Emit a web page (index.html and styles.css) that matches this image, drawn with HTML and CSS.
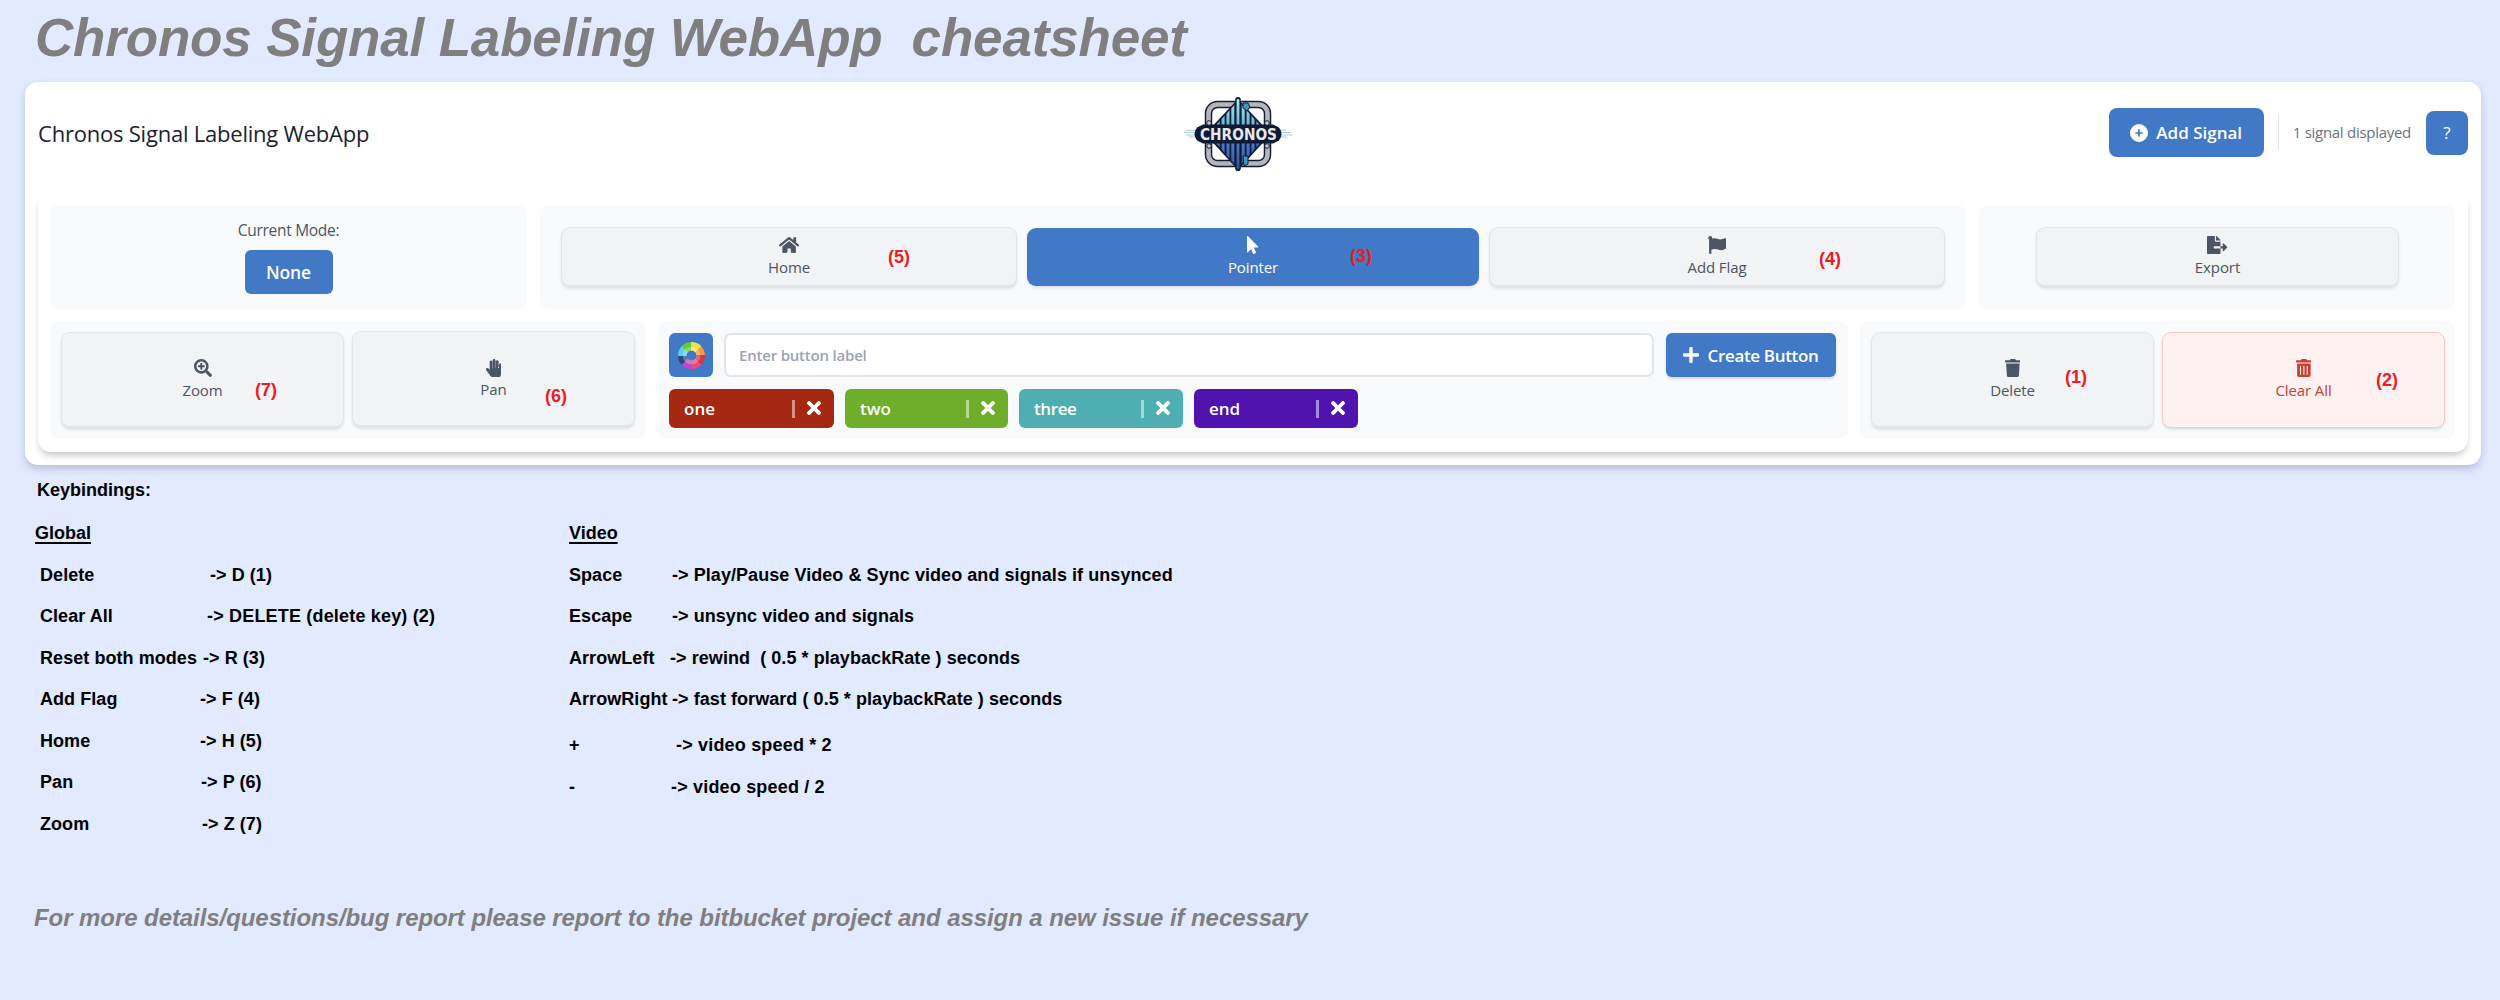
FILE: index.html
```html
<!DOCTYPE html>
<html lang="en">
<head>
<meta charset="utf-8">
<title>Chronos Signal Labeling WebApp cheatsheet</title>
<link rel="stylesheet" href="styles.css">
</head>
<body>
<h1 class="page-title">Chronos Signal Labeling WebApp  cheatsheet</h1>

<main class="panel">
  <header class="topbar">
    <h2 class="app-name">Chronos Signal Labeling WebApp</h2>
    <svg class="logo" viewBox="0 0 110 76" aria-label="Chronos">
      <defs>
        <linearGradient id="bars" gradientUnits="userSpaceOnUse" x1="0" y1="4" x2="0" y2="72">
          <stop offset="0" stop-color="#9beceb"/><stop offset=".4" stop-color="#62b4d2"/><stop offset=".6" stop-color="#4a7fd0"/><stop offset="1" stop-color="#34549f"/>
        </linearGradient>
        <clipPath id="diamond"><path d="M55 5 85 38 55 72 25 38z"/></clipPath>
      </defs>
      <rect x="25.500" y="8.500" width="59" height="59" rx="9" fill="none" stroke="#141d33" stroke-width="7.500"/>
      <rect x="25.500" y="8.500" width="59" height="59" rx="9" fill="none" stroke="#b4b6b9" stroke-width="4.600"/>
      <path d="M55 3 88 38 55 74 22 38z" fill="#121c36"/>
      <g clip-path="url(#diamond)" fill="url(#bars)">
        <path d="M28.800 0h3v76h-3zM33.700 0h3v76h-3zM38.600 0h3v76h-3zM43.500 0h3v76h-3zM48.300 0h3v76h-3zM58.700 0h3v76h-3zM63.600 0h3v76h-3zM68.500 0h3v76h-3zM73.400 0h3v76h-3zM78.200 0h3v76h-3z"/>
      </g>
      <rect x="52.200" y="1" width="5.600" height="74" rx="2.800" fill="#121c36"/>
      <rect x="53.600" y="3" width="2.800" height="70" rx="1.400" fill="url(#bars)"/>
      <path d="M60 7h5l2 4-3 4-4-3zM60 60h5v8l-4 2z" fill="#4795bd" stroke="#121c36"/>
      <path d="M1 36.500h14M3 39h12M6 41h9M3 34.500h11M95 36.500h12M95 39h14M95 34h8M95 41h9" fill="none" stroke="#a9cbdc" stroke-width="1"/>
      <path d="M20 28.500h70l6 3q5 6.500 0 13l-6 3H20l-6-3q-5-6.500 0-13z" fill="#0e1a33"/>
      <circle cx="26" cy="27" r="2.300" fill="#c5c8cc" stroke="#141d33"/><circle cx="84" cy="27" r="2.300" fill="#c5c8cc" stroke="#141d33"/>
      <circle cx="26" cy="50" r="2.300" fill="#c5c8cc" stroke="#141d33"/><circle cx="84" cy="50" r="2.300" fill="#c5c8cc" stroke="#141d33"/>
      <text class="logo-word" x="17" y="43.500" textLength="77" lengthAdjust="spacingAndGlyphs">CHRONOS</text>
    </svg>
    <div class="actions">
      <button class="primary add-signal">
        <svg class="ico-18" viewBox="0 0 512 512"><path d="M256 512A256 256 0 1 0 256 0a256 256 0 1 0 0 512zM232 344V280H168c-13.300 0-24-10.700-24-24s10.700-24 24-24h64V168c0-13.300 10.700-24 24-24s24 10.700 24 24v64h64c13.300 0 24 10.700 24 24s-10.700 24-24 24H280v64c0 13.300-10.700 24-24 24s-24-10.700-24-24z"/></svg>
        <span>Add Signal</span>
      </button>
      <span class="count">1 signal displayed</span>
      <button class="primary help">?</button>
    </div>
  </header>

  <div class="card">
    <div class="row row-modes">
      <section class="group mode">
        <span class="mode-label">Current Mode:</span>
        <span class="mode-badge">None</span>
      </section>
      <section class="group views">
        <button class="tool">
          <svg class="ico" viewBox="0 0 576 512"><path d="M280.370 148.260L96 300.110V464a16 16 0 0 0 16 16l112.060-.29a16 16 0 0 0 15.920-16V368a16 16 0 0 1 16-16h64a16 16 0 0 1 16 16v95.640a16 16 0 0 0 16 16.050L464 480a16 16 0 0 0 16-16V300L295.670 148.260a12.190 12.190 0 0 0-15.300 0zM571.600 251.470L488 182.560V44.050a12 12 0 0 0-12-12h-56a12 12 0 0 0-12 12v72.610L318.470 43a48 48 0 0 0-61 0L4.340 251.470a12 12 0 0 0-1.600 16.900l25.500 31A12 12 0 0 0 45.150 301l235.220-193.740a12.190 12.190 0 0 1 15.300 0L530.900 301a12 12 0 0 0 16.900-1.600l25.500-31a12 12 0 0 0-1.700-16.930z"/></svg>
          <span>Home</span><b class="mark mark-5">(5)</b>
        </button>
        <button class="tool active">
          <svg class="ico" viewBox="0 0 320 512"><path d="M302.189 329.126H196.105l55.831 135.993c3.889 9.428-.555 19.999-9.444 23.999l-49.165 21.427c-9.165 4-19.443-.571-23.332-9.714l-53.053-129.136-86.664 89.138C18.729 472.710 0 463.554 0 447.977V18.299C0 1.899 19.921-6.096 30.277 5.443l284.412 292.542c11.472 11.179 3.007 31.141-12.500 31.141z"/></svg>
          <span>Pointer</span><b class="mark mark-3">(3)</b>
        </button>
        <button class="tool">
          <svg class="ico" viewBox="0 0 512 512"><path d="M349.565 98.783C295.978 98.783 251.721 64 184.348 64c-24.955 0-47.309 4.384-68.045 12.013a55.947 55.947 0 0 0 3.586-23.562C118.117 24.015 94.806 1.206 66.338.048 34.345-1.254 8 24.296 8 56c0 19.026 9.497 35.825 24 45.945V488c0 13.255 10.745 24 24 24h16c13.255 0 24-10.745 24-24v-94.400c28.311-12.064 63.582-22.122 114.435-22.122 53.588 0 97.844 34.783 165.217 34.783 48.169 0 86.667-16.294 122.505-40.858C506.840 359.452 512 349.571 512 339.045v-243.100c0-23.393-24.269-38.870-45.485-29.016-34.338 15.948-76.454 31.854-116.950 31.854z"/></svg>
          <span>Add Flag</span><b class="mark mark-4">(4)</b>
        </button>
      </section>
      <section class="group output">
        <button class="tool">
          <svg class="ico" viewBox="0 0 576 512"><path d="M384 121.900c0-6.300-2.500-12.400-7-16.900L279.100 7c-4.500-4.500-10.600-7-17-7H256v128h128zM571 308l-95.700-96.400c-10.100-10.100-27.400-3-27.400 11.300V288h-64v64h64v65.200c0 14.300 17.300 21.400 27.400 11.300L571 332c6.600-6.600 6.600-17.400 0-24zm-379 28v-32c0-8.800 7.200-16 16-16h176V160H248c-13.200 0-24-10.800-24-24V0H24C10.700 0 0 10.700 0 24v464c0 13.300 10.700 24 24 24h336c13.300 0 24-10.700 24-24V352H208c-8.800 0-16-7.200-16-16z"/></svg>
          <span>Export</span>
        </button>
      </section>
    </div>

    <div class="row row-tools">
      <section class="group pair">
        <button class="tool tall">
          <svg class="ico" viewBox="0 0 512 512"><path d="M304 192v32c0 6.600-5.400 12-12 12h-56v56c0 6.600-5.400 12-12 12h-32c-6.600 0-12-5.400-12-12v-56h-56c-6.600 0-12-5.400-12-12v-32c0-6.600 5.400-12 12-12h56v-56c0-6.600 5.400-12 12-12h32c6.600 0 12 5.400 12 12v56h56c6.600 0 12 5.400 12 12zm201 284.700L476.700 505c-9.400 9.400-24.600 9.400-33.900 0L343 405.300c-4.500-4.500-7-10.600-7-17V372c-35.300 27.600-79.700 44-128 44C93.100 416 0 322.900 0 208S93.100 0 208 0s208 93.100 208 208c0 48.300-16.400 92.700-44 128h16.300c6.400 0 12.500 2.500 17 7l99.700 99.700c9.300 9.400 9.300 24.600 0 34zM344 208c0-75.200-60.800-136-136-136S72 132.800 72 208s60.800 136 136 136 136-60.800 136-136z"/></svg>
          <span>Zoom</span><b class="mark mark-7">(7)</b>
        </button>
        <button class="tool tall raised">
          <svg class="ico" viewBox="0 0 448 512"><path d="M408.781 128.007C386.356 127.578 368 146.360 368 168.790V256h-8V79.790c0-22.430-18.356-41.212-40.781-40.783C297.488 39.423 280 57.169 280 79v177h-8V40.790C272 18.360 253.644-.422 231.219.007 209.488.423 192 18.169 192 40v216h-8V80.790c0-22.430-18.356-41.212-40.781-40.783C121.488 40.423 104 58.169 104 80v235.992l-31.648-43.519c-12.993-17.866-38.009-21.817-55.877-8.823-17.865 12.994-21.815 38.010-8.822 55.877l125.601 172.705A48 48 0 0 0 172.073 512h197.590c22.274 0 41.622-15.324 46.724-37.006l26.508-112.660a192.011 192.011 0 0 0 5.104-43.975V168c0-21.831-17.488-39.577-39.218-39.993z"/></svg>
          <span>Pan</span><b class="mark mark-6">(6)</b>
        </button>
      </section>

      <section class="group builder">
        <div class="create">
          <button class="primary picker"><span class="wheel"></span></button>
          <input class="label-input" type="text" placeholder="Enter button label">
          <button class="primary create-btn">
            <svg class="ico-plus" viewBox="0 32 448 448"><path d="M416 208H272V64c0-17.670-14.330-32-32-32h-32c-17.670 0-32 14.330-32 32v144H32c-17.670 0-32 14.330-32 32v32c0 17.670 14.330 32 32 32h144v144c0 17.670 14.330 32 32 32h32c17.670 0 32-14.330 32-32V304h144c17.670 0 32-14.330 32-32v-32c0-17.670-14.330-32-32-32z"/></svg>
            <span>Create Button</span>
          </button>
        </div>
        <div class="tags">
          <div class="tag tag-one"><span>one</span><i></i><svg viewBox="0 80 352 352"><use href="#times"/></svg></div>
          <div class="tag tag-two"><span>two</span><i></i><svg viewBox="0 80 352 352"><use href="#times"/></svg></div>
          <div class="tag tag-three"><span>three</span><i></i><svg viewBox="0 80 352 352"><use href="#times"/></svg></div>
          <div class="tag tag-end"><span>end</span><i></i><svg viewBox="0 80 352 352"><path id="times" d="M242.720 256l100.070-100.070c12.280-12.280 12.280-32.190 0-44.480l-22.240-22.240c-12.280-12.280-32.190-12.280-44.480 0L176 189.280 75.930 89.210c-12.280-12.280-32.190-12.280-44.480 0L9.210 111.450c-12.280 12.280-12.280 32.190 0 44.480L109.280 256 9.210 356.070c-12.280 12.280-12.280 32.190 0 44.480l22.240 22.240c12.280 12.280 32.200 12.280 44.480 0L176 322.720l100.070 100.070c12.280 12.280 32.200 12.280 44.480 0l22.240-22.240c12.280-12.280 12.280-32.190 0-44.480L242.720 256z"/></svg></div>
        </div>
      </section>

      <section class="group pair">
        <button class="tool tall">
          <svg class="ico" viewBox="0 0 448 512"><path d="M432 32H312l-9.400-18.700A24 24 0 0 0 281.100 0H166.800a23.720 23.720 0 0 0-21.400 13.300L136 32H16A16 16 0 0 0 0 48v32a16 16 0 0 0 16 16h416a16 16 0 0 0 16-16V48a16 16 0 0 0-16-16zM53.200 467a48 48 0 0 0 47.900 45h245.800a48 48 0 0 0 47.900-45L416 128H32z"/></svg>
          <span>Delete</span><b class="mark mark-1">(1)</b>
        </button>
        <button class="tool tall danger">
          <svg class="ico" viewBox="0 0 448 512"><path d="M32 464a48 48 0 0 0 48 48h288a48 48 0 0 0 48-48V128H32zm272-256a16 16 0 0 1 32 0v224a16 16 0 0 1-32 0zm-96 0a16 16 0 0 1 32 0v224a16 16 0 0 1-32 0zm-96 0a16 16 0 0 1 32 0v224a16 16 0 0 1-32 0zM432 32H312l-9.400-18.700A24 24 0 0 0 281.100 0H166.800a23.720 23.720 0 0 0-21.400 13.300L136 32H16A16 16 0 0 0 0 48v32a16 16 0 0 0 16 16h416a16 16 0 0 0 16-16V48a16 16 0 0 0-16-16z"/></svg>
          <span>Clear All</span><b class="mark mark-2">(2)</b>
        </button>
      </section>
    </div>
  </div>
</main>

<section class="keys">
  <h3 class="keys-title">Keybindings:</h3>
  <div class="key-columns">
    <div class="key-col global">
      <h4>Global</h4>
      <ul>
        <li><b>Delete</b><span>-&gt; D (1)</span></li>
        <li><b>Clear All</b><span class="wide">-&gt; DELETE (delete key) (2)</span></li>
        <li><b>Reset both modes</b><span>-&gt; R (3)</span></li>
        <li><b>Add Flag</b><span>-&gt; F (4)</span></li>
        <li><b>Home</b><span>-&gt; H (5)</span></li>
        <li><b>Pan</b><span>-&gt; P (6)</span></li>
        <li><b>Zoom</b><span>-&gt; Z (7)</span></li>
      </ul>
    </div>
    <div class="key-col video">
      <h4>Video</h4>
      <ul>
        <li><b>Space</b><span>-&gt; Play/Pause Video &amp; Sync video and signals if unsynced</span></li>
        <li><b>Escape</b><span>-&gt; unsync video and signals</span></li>
        <li><b>ArrowLeft</b><span>-&gt; rewind  ( 0.5 * playbackRate ) seconds</span></li>
        <li><b>ArrowRight</b><span>-&gt; fast forward ( 0.5 * playbackRate ) seconds</span></li>
        <li class="spaced"><b>+</b><span class="wide">-&gt; video speed * 2</span></li>
        <li><b>-</b><span class="wide">-&gt; video speed / 2</span></li>
      </ul>
    </div>
  </div>
</section>

<p class="footnote">For more details/questions/bug report please report to the bitbucket project and assign a new issue if necessary</p>
</body>
</html>
```
FILE: styles.css
```css
* { box-sizing: border-box; }

body {
  margin: 0;
  height: 1000px;
  overflow: hidden;
  background: #e1eafe;
  color: #000;
  font-family: "Open Sans", "Noto Sans", sans-serif;
}

h1, h2, h3, h4, p, ul { margin: 0; padding: 0; }
ul { list-style: none; }
button { border: 0; padding: 0; font: inherit; color: inherit; }
svg { display: block; fill: currentColor; }

.page-title {
  height: 82px;
  padding-left: 35px;
  font: italic bold 53px/75px "Liberation Sans", Arial, sans-serif;
  letter-spacing: -.18px;
  color: #7f7f7f;
  white-space: pre;
}

.panel {
  width: 2456px;
  height: 383px;
  margin-left: 25px;
  padding: 0 13px;
  border-radius: 13px;
  background: #fff;
  box-shadow: 0 4px 9px -1px rgba(60, 75, 120, .3);
}

.topbar {
  display: grid;
  grid-template-columns: 1145px 110px 1fr;
  align-items: center;
  height: 101px;
  margin-bottom: 9px;
}
.app-name { font-size: 22px; line-height: 30px; font-weight: 500; letter-spacing: -.22px; color: #1c2130; }
.logo { width: 110px; height: 76px; margin-top: 2px; overflow: visible; }
.logo-word { font: bold 15px "DejaVu Sans", sans-serif; fill: #e3e9ee; }
.actions { display: flex; align-items: center; justify-content: flex-end; }

.primary { background: #4179c6; color: #fff; display: flex; align-items: center; justify-content: center; border-radius: 6px; }
.add-signal { width: 155px; height: 49px; border-radius: 8px; gap: 8px; font-size: 17px; font-weight: 600; }
.ico-18 { width: 18px; height: 18px; }
.ico-plus { width: 16px; height: 16px; }
.count { height: 35px; line-height: 35px; margin-left: 14px; padding: 0 15px 0 14px; border-left: 1px solid #e2e4e8; font-size: 15px; letter-spacing: -.28px; color: #6b7280; }
.help { width: 42px; height: 44px; border-radius: 8px; font-size: 17px; }

.card {
  height: 260px;
  padding: 13px 13px 13px 12px;
  border-radius: 13px;
  background: #fff;
  box-shadow: 0 5px 7px -2px rgba(0, 0, 0, .24);
}
.row { display: grid; }
.row-modes { grid-template-columns: 477px 1fr 476px; column-gap: 13px; height: 103px; margin-bottom: 13px; }
.row-tools { grid-template-columns: 596px 1fr 595px; column-gap: 12px; height: 118px; }
.group { border-radius: 9px; background: #f9fafc; }

.mode { display: flex; flex-direction: column; align-items: center; padding-top: 13px; }
.mode-label { font-size: 15.500px; line-height: 25px; letter-spacing: -.3px; color: #4b5563; }
.mode-badge { width: 88px; height: 44px; margin-top: 7px; border-radius: 6px; background: #4179c6; color: #fff; font-size: 17.500px; font-weight: 600; letter-spacing: -.2px; line-height: 45px; text-align: center; }

.views { display: grid; grid-template-columns: 456px 452px 456px; gap: 10px; padding: 22px 21px; }
.output { padding: 22px 56px 0 57px; }
.pair { display: grid; grid-template-columns: 283px 283px; gap: 8px; padding: 11px 0 0 11px; }

.tool {
  position: relative;
  display: flex;
  flex-direction: column;
  align-items: center;
  width: 100%;
  height: 60px;
  padding-top: 8px;
  border: 1px solid #e4e5e8;
  border-bottom-width: 2px;
  border-radius: 9px;
  background: #f2f3f5;
  box-shadow: 0 2px 3px rgba(0, 0, 0, .1);
  color: #4b5563;
  font-size: 15px;
  letter-spacing: -.1px;
  line-height: 22px;
}
.tool .ico { height: 18px; margin-bottom: 2px; }
.tool.active { height: 58px; margin-top: 1px; border: 0; background: #4179c6; color: #fff; }
.tool.tall { height: 96px; padding-top: 26px; }
.tool.raised { margin-top: -1px; padding-top: 27px; }
.tool.raised .ico { margin-bottom: 1px; }
.tool.danger { background: #fdf2f1; border: 1px solid #f7cac8; color: #c8402f; }

/* Red number references laid over the buttons */
.mark { position: absolute; font: bold 18px/18px "Liberation Sans", Arial, sans-serif; letter-spacing: 0; color: #ed1c24; }
.mark-1 { left: 193px; top: 35px; }
.mark-2 { left: 213px; top: 38px; }
.mark-3 { left: 323px; top: 19px; }
.mark-4 { left: 329px; top: 22px; }
.mark-5 { left: 326px; top: 20px; }
.mark-6 { left: 192px; top: 55px; }
.mark-7 { left: 193px; top: 48px; }

.builder { padding: 12px 12px 0 11px; }
.create { display: flex; margin-bottom: 12px; }
.picker { width: 44px; height: 44px; margin-right: 11px; }
.wheel {
  width: 27px;
  height: 27px;
  border-radius: 50%;
  background:
    radial-gradient(circle, #4179c6 4.500px, rgba(255, 255, 255, .25) 5.200px 8.500px, transparent 9.200px),
    conic-gradient(#f3df49 45deg, #f39a41 45deg 90deg, #d4354c 90deg 135deg, #ea4a7c 135deg 180deg, #b44cc4 180deg 225deg, #234d86 225deg 270deg, #5ecdf4 270deg 315deg, #62cb38 315deg);
}
.label-input {
  flex: 1;
  height: 44px;
  margin-right: 12px;
  padding: 0 13px;
  border: 2px solid #e4e5e9;
  border-radius: 7px;
  background: #fff;
  font: 600 15px/22px "Open Sans", "Noto Sans", sans-serif;
  letter-spacing: -.2px;
}
.label-input::placeholder { color: #9ca3af; opacity: 1; }
.create-btn { width: 170px; height: 44px; gap: 8px; font-size: 17px; font-weight: 600; letter-spacing: -.33px; box-shadow: 0 2px 3px rgba(0, 0, 0, .15); }

.tags { display: flex; gap: 11px; }
.tag { display: flex; align-items: center; width: 164px; height: 39px; padding: 0 13px 0 15px; border-radius: 6px; color: #fff; font-size: 17px; font-weight: 600; }
.tag span { flex: 1; }
.tag i { width: 3px; height: 18px; margin-right: 12px; background: rgba(255, 255, 255, .5); }
.tag svg { width: 14px; height: 14px; margin-top: -2px; }
.tag-one { width: 165px; background: #a52812; }
.tag-two { width: 163px; background: #6eae2a; }
.tag-three { background: #4eaeb1; letter-spacing: -.4px; }
.tag-end { background: #5113ad; }

.keys { margin-top: 3.500px; padding-left: 35px; font: bold 18px "Liberation Sans", Arial, sans-serif; }
.keys-title, .key-col h4 { height: 43px; font-size: 18px; line-height: 43px; }
.keys-title { padding-left: 2px; }
.key-columns { display: grid; grid-template-columns: 534px 1fr; height: 333.500px; }
.key-col h4 { text-decoration: underline; text-decoration-thickness: 2px; text-underline-offset: 3px; }
.key-col li { display: flex; height: 41.500px; line-height: 41.500px; letter-spacing: .06px; white-space: pre; }
.key-col .wide { letter-spacing: .18px; }
.key-col .spaced { margin-top: 4.500px; }

.global ul { padding-left: 5px; }
.global b { width: 160px; }
.global li:nth-child(1) b { width: 170px; }
.global li:nth-child(2) b { width: 167px; }
.global li:nth-child(3) b { width: 163px; }
.global li:nth-child(6) b { width: 161px; }
.global li:nth-child(7) b { width: 162px; }

.video b { width: 103px; }
.video li:nth-child(3) b { width: 101px; }
.video li:nth-child(5) b { width: 107px; }
.video li:nth-child(6) b { width: 102px; }

.footnote { margin-top: 52.500px; padding-left: 34px; font: italic bold 24px/40px "Liberation Sans", Arial, sans-serif; letter-spacing: -.07px; color: #7f7f7f; }
```
